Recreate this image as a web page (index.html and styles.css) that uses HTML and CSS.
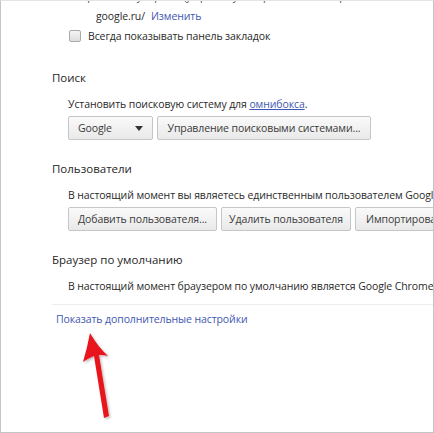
FILE: index.html
```html
<!DOCTYPE html>
<html lang="ru">
<head>
<meta charset="utf-8">
<link rel="stylesheet" href="styles.css">
</head>
<body>
<div class="frame">
  <div class="cut-row"><span class="cut-text">Открывать эту страницу при запуске приложения: http://www.</span></div>
  <div class="url-row"><span>google.ru/</span><a class="link" href="#">Изменить</a></div>
  <label class="check-row"><span class="checkbox"></span><span>Всегда показывать панель закладок</span></label>

  <section class="section first">
    <h2 class="heading">Поиск</h2>
    <div class="body">
      <p class="desc">Установить поисковую систему для <a class="link underline" href="#">омнибокса</a>.</p>
      <div class="buttons">
        <div class="btn select"><span>Google</span><span class="caret"></span></div>
        <div class="btn manage">Управление поисковыми системами...</div>
      </div>
    </div>
  </section>

  <section class="section">
    <h2 class="heading">Пользователи</h2>
    <div class="body">
      <p class="desc nowrap">В настоящий момент вы являетесь единственным пользователем Google Chrome.</p>
      <div class="buttons">
        <div class="btn add">Добавить пользователя...</div>
        <div class="btn del">Удалить пользователя</div>
        <div class="btn imp">Импортировать закладки и настройки</div>
      </div>
    </div>
  </section>

  <section class="section">
    <h2 class="heading">Браузер по умолчанию</h2>
    <div class="body">
      <p class="desc nowrap">В настоящий момент браузером по умолчанию является Google Chrome.</p>
    </div>
  </section>

  <div class="separator"></div>
  <a class="link more" href="#">Показать дополнительные настройки</a>

  <svg class="arrow" width="40" height="100" viewBox="78 328 40 100" aria-hidden="true">
    <defs>
      <filter id="sh" x="-50%" y="-50%" width="200%" height="200%">
        <feDropShadow dx="1.5" dy="1.5" stdDeviation="1.2" flood-color="#000" flood-opacity="0.25"/>
      </filter>
    </defs>
    <path filter="url(#sh)" fill="#e8141c" d="M90,333 Q98,347 108,356 Q103,354.5 99,355 L109,416 L104,418 L94,356 Q89,358 83,362 Q87,349 90,333 Z"/>
  </svg>
</div>
</body>
</html>
```

FILE: styles.css
```css
* { box-sizing: border-box; }
html, body { margin: 0; padding: 0; background: #fff; }
body {
  font-family: "Open Sans", "Noto Sans", sans-serif;
  font-size: 10.5px;
  letter-spacing: -0.1px;
  color: #2a2a2a;
}
.frame {
  position: relative;
  width: 434px;
  height: 433px;
  border-left: 1px solid #c4c4c4;
  border-right: 1px solid #c4c4c4;
  border-bottom: 1px solid #c4c4c4;
  border-top: 1px solid #e4e4e4;
  overflow: hidden;
}
.cut-row {
  height: 5px;
  overflow: hidden;
  padding-left: 68px;
}
.cut-text {
  display: block;
  line-height: 20px;
  margin-top: -15px;
  white-space: nowrap;
  color: #555;
}
.url-row {
  height: 20px;
  display: flex;
  align-items: center;
  padding-left: 95px;
  gap: 6px;
}
.link { color: #3f57b3; text-decoration: none; }
.link.underline { text-decoration: underline; }
.check-row {
  height: 20px;
  display: flex;
  align-items: center;
  padding-left: 68px;
  gap: 7px;
}
.checkbox {
  width: 12px;
  height: 12px;
  border: 1px solid #a9a9a9;
  border-radius: 2px;
  background: linear-gradient(#f4f4f4, #dedede);
}
.section { margin-top: 19px; }
.section.first { margin-top: 22px; }
.heading {
  margin: 0;
  height: 20px;
  line-height: 20px;
  padding-left: 51px;
  font-size: 11.5px;
  letter-spacing: 0;
  font-weight: normal;
  color: #262626;
}
.body { padding-left: 67px; }
.desc {
  margin: 6px 0 0;
  height: 20px;
  line-height: 20px;
  white-space: nowrap;
}
.buttons {
  display: flex;
  gap: 4px;
  margin-top: 2px;
  white-space: nowrap;
}
.btn {
  height: 24px;
  display: flex;
  align-items: center;
  padding: 0 10px;
  border: 1px solid #c6c6c6;
  border-radius: 2px;
  background: linear-gradient(#fafafa, #e9e9e9);
  color: #3a3a3a;
  flex-shrink: 0;
}
.select {
  width: 85px;
  justify-content: space-between;
  padding: 0 9px;
}
.caret {
  width: 0;
  height: 0;
  border-left: 4px solid transparent;
  border-right: 4px solid transparent;
  border-top: 5px solid #333;
}
.manage { width: 214px; justify-content: center; }
.add { width: 149px; justify-content: center; }
.del { width: 130px; justify-content: center; }
.separator {
  margin: 8px 0 0 51px;
  height: 1px;
  background: #ececec;
}
.more {
  display: block;
  height: 20px;
  line-height: 20px;
  margin-top: 4px;
  padding-left: 55px;
}
.arrow {
  position: absolute;
  left: 77px;
  top: 327px;
}
```
